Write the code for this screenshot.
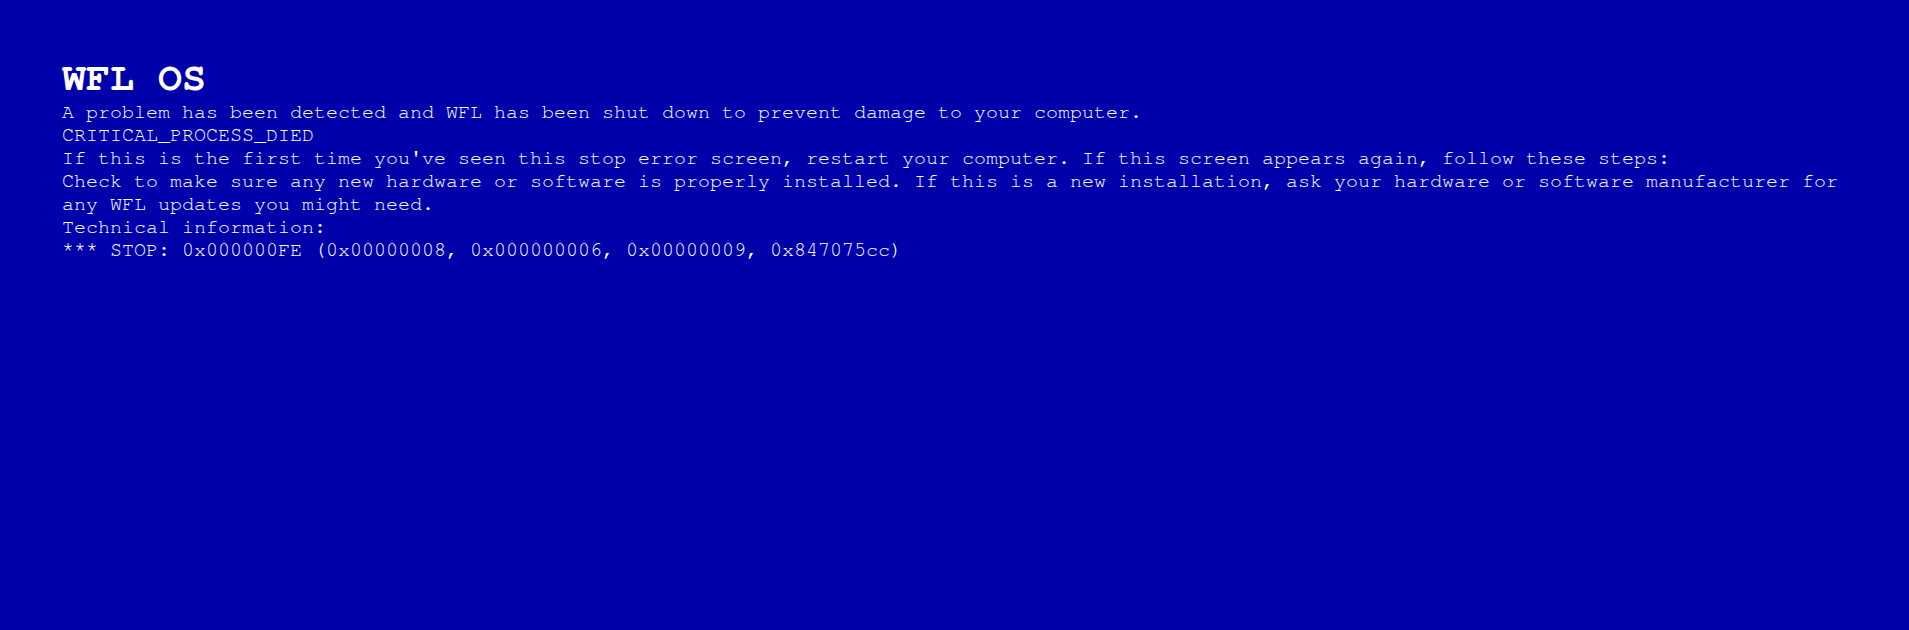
export default function App() {
  return (
    <div className="h-screen w-screen overflow-hidden bg-[#0000aa] pl-[62px] pr-[62px] pt-[55px] text-white font-['FreeMono','Courier_New',monospace] leading-[1.15]">
      <h1 className="text-[40px] font-bold">WFL OS</h1>
      <p className="text-[20px]">A problem has been detected and WFL has been shut down to prevent damage to your computer.</p>
      <p className="text-[20px]">CRITICAL_PROCESS_DIED</p>
      <p className="text-[20px]">
        If this is the first time you've seen this stop error screen, restart your computer. If this screen appears again, follow these steps:
      </p>
      <p className="text-[20px]">
        Check to make sure any new hardware or software is properly installed. If this is a new installation, ask your hardware or software manufacturer for any WFL updates you might need.
      </p>
      <p className="text-[20px]">Technical information:</p>
      <p className="text-[20px]">*** STOP: 0x000000FE (0x00000008, 0x000000006, 0x00000009, 0x847075cc)</p>
    </div>
  )
}
